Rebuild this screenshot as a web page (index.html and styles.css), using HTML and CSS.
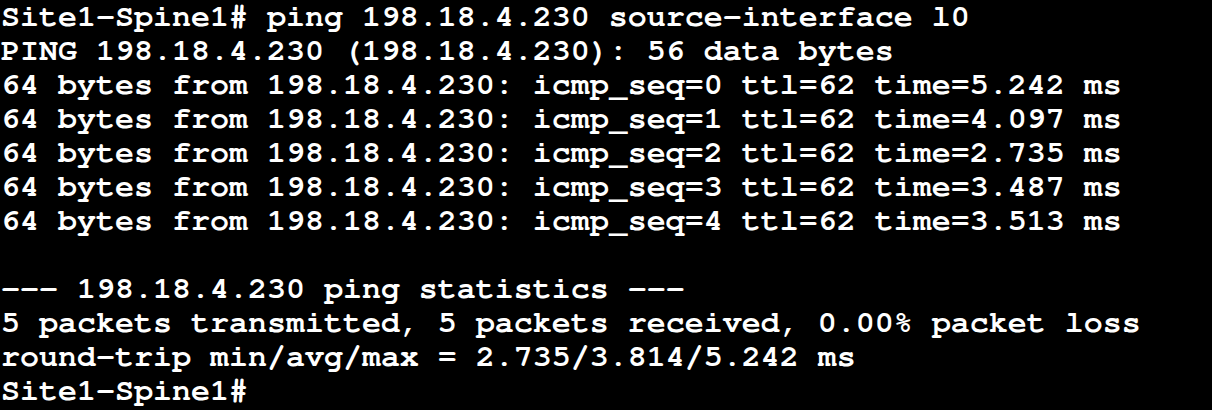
FILE: index.html
```html
<!DOCTYPE html>
<html>
<head>
<meta charset="utf-8">
<link rel="stylesheet" href="styles.css">
</head>
<body>
<pre class="terminal">Site1-Spine1# ping 198.18.4.230 source-interface l0
PING 198.18.4.230 (198.18.4.230): 56 data bytes
64 bytes from 198.18.4.230: icmp_seq=0 ttl=62 time=5.242 ms
64 bytes from 198.18.4.230: icmp_seq=1 ttl=62 time=4.097 ms
64 bytes from 198.18.4.230: icmp_seq=2 ttl=62 time=2.735 ms
64 bytes from 198.18.4.230: icmp_seq=3 ttl=62 time=3.487 ms
64 bytes from 198.18.4.230: icmp_seq=4 ttl=62 time=3.513 ms

--- 198.18.4.230 ping statistics ---
5 packets transmitted, 5 packets received, 0.00% packet loss
round-trip min/avg/max = 2.735/3.814/5.242 ms
Site1-Spine1#</pre>
</body>
</html>
```
FILE: styles.css
```css
html, body {
  margin: 0;
  padding: 0;
  background: #000;
  height: 100%;
}
.terminal {
  margin: 0;
  padding: 0 0 0 1px;
  color: #fff;
  font-family: "Nimbus Mono PS", "Nimbus Mono L", "FreeMono", "Courier", "Liberation Mono", "Courier New", monospace;
  font-weight: bold;
  font-size: 31.67px;
  line-height: 34px;
  white-space: pre;
}
```
